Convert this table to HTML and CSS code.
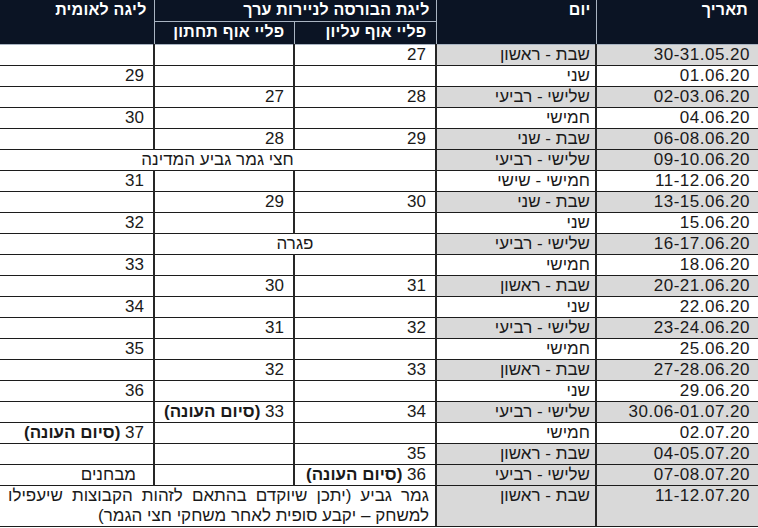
FILE: index.html
```html
<!DOCTYPE html>
<html lang="he" dir="rtl">
<head>
<meta charset="utf-8">
<link rel="stylesheet" href="styles.css">
</head>
<body>
<div class="page">
<table class="sched">
<colgroup>
<col class="c-date"><col class="c-day"><col class="c-up"><col class="c-low"><col class="c-nat">
</colgroup>
<thead>
<tr class="h1">
<th rowspan="2" class="h-date">תאריך</th>
<th rowspan="2" class="h-day">יום</th>
<th colspan="2" class="h-grp">ליגת הבורסה לניירות ערך</th>
<th rowspan="2" class="h-nat">ליגה לאומית</th>
</tr>
<tr class="h2">
<th class="h-sub">פליי אוף עליון</th>
<th class="h-sub">פליי אוף תחתון</th>
</tr>
</thead>
<tbody>
<tr class="g"><td>30-31.05.20</td><td>שבת - ראשון</td><td>27</td><td></td><td></td></tr>
<tr><td>01.06.20</td><td>שני</td><td></td><td></td><td>29</td></tr>
<tr class="g"><td>02-03.06.20</td><td>שלישי - רביעי</td><td>28</td><td>27</td><td></td></tr>
<tr><td>04.06.20</td><td>חמישי</td><td></td><td></td><td>30</td></tr>
<tr class="g"><td>06-08.06.20</td><td>שבת - שני</td><td>29</td><td>28</td><td></td></tr>
<tr class="g"><td>09-10.06.20</td><td>שלישי - רביעי</td><td colspan="3" class="mid">חצי גמר גביע המדינה</td></tr>
<tr><td>11-12.06.20</td><td>חמישי - שישי</td><td></td><td></td><td>31</td></tr>
<tr class="g"><td>13-15.06.20</td><td>שבת - שני</td><td>30</td><td>29</td><td></td></tr>
<tr><td>15.06.20</td><td>שני</td><td></td><td></td><td>32</td></tr>
<tr class="g"><td>16-17.06.20</td><td>שלישי - רביעי</td><td colspan="2" class="mid">פגרה</td><td></td></tr>
<tr><td>18.06.20</td><td>חמישי</td><td></td><td></td><td>33</td></tr>
<tr class="g"><td>20-21.06.20</td><td>שבת - ראשון</td><td>31</td><td>30</td><td></td></tr>
<tr><td>22.06.20</td><td>שני</td><td></td><td></td><td>34</td></tr>
<tr class="g"><td>23-24.06.20</td><td>שלישי - רביעי</td><td>32</td><td>31</td><td></td></tr>
<tr><td>25.06.20</td><td>חמישי</td><td></td><td></td><td>35</td></tr>
<tr class="g"><td>27-28.06.20</td><td>שבת - ראשון</td><td>33</td><td>32</td><td></td></tr>
<tr><td>29.06.20</td><td>שני</td><td></td><td></td><td>36</td></tr>
<tr class="g"><td>30.06-01.07.20</td><td>שלישי - רביעי</td><td>34</td><td>33 <b>(סיום העונה)</b></td><td></td></tr>
<tr><td>02.07.20</td><td>חמישי</td><td></td><td></td><td>37 <b>(סיום העונה)</b></td></tr>
<tr class="g"><td>04-05.07.20</td><td>שבת - ראשון</td><td>35</td><td></td><td></td></tr>
<tr class="g"><td>07-08.07.20</td><td>שלישי - רביעי</td><td>36 <b>(סיום העונה)</b></td><td></td><td class="exam">מבחנים</td></tr>
<tr class="g last"><td>11-12.07.20</td><td>שבת - ראשון</td><td colspan="3" class="note"><span class="l1">גמר גביע (יתכן שיוקדם בהתאם לזהות הקבוצות שיעפילו</span><span class="l2">למשחק – יקבע סופית לאחר משחקי חצי הגמר)</span></td></tr>
</tbody>
</table>
</div>
</body>
</html>
```

FILE: styles.css
```css
html, body {
  margin: 0;
  padding: 0;
  background: #ffffff;
}
.page {
  width: 758px;
  height: 528px;
  overflow: hidden;
}
.sched {
  width: 758px;
  border-collapse: collapse;
  table-layout: fixed;
  font-family: "Liberation Sans", Arial, sans-serif;
  font-size: 17px;
  color: #1a1a1a;
}
.c-date { width: 162px; }
.c-day { width: 160px; }
.c-up { width: 142px; }
.c-low { width: 140px; }
.c-nat { width: 154px; }

thead th {
  background: #0b1424;
  color: #ffffff;
  font-weight: bold;
  font-size: 16px;
  letter-spacing: 0.2px;
  text-align: right;
  vertical-align: top;
  line-height: 18px;
  padding: 1px 7px 0 2px;
  border: 1px solid #a9b4c2;
  border-top: none;
  white-space: nowrap;
}
.h1 th { height: 20px; }
.h2 th { height: 21px; }
.h-date { padding-right: 10px; border-right: none; }
.h-day { padding-right: 5px; }
.h-grp { padding-right: 6px; }
.h-nat { border-left: none; }
.h-sub { padding-right: 9px; }

tbody td {
  height: 20px;
  padding: 0 9px 0 2px;
  line-height: 20px;
  text-align: right;
  vertical-align: middle;
  border-top: 1px solid #1c1c1c;
  border-bottom: 1px solid #1c1c1c;
  border-left: 2px solid #262626;
  border-right: 2px solid #262626;
  white-space: nowrap;
}
tbody td:first-child {
  border-right: none;
  padding-right: 8px;
  letter-spacing: 0.5px;
}
tbody td:last-child { border-left: none; }
tbody td:nth-child(2) { padding-right: 5px; }
tbody tr.g td:nth-child(1),
tbody tr.g td:nth-child(2) { background: #d9d9d9; }
tbody td.mid { text-align: center; padding: 0; }
tbody td.exam { padding-right: 17px; }
tbody b { font-weight: bold; }

tbody tr.last td {
  height: 40px;
  vertical-align: top;
  border-bottom: 1px solid #1c1c1c;
}
tbody td.note {
  white-space: normal;
  padding: 0 6px 0 8px;
  line-height: 20px;
  letter-spacing: 0;
}
.note .l1 {
  display: block;
  text-align: justify;
  text-align-last: justify;
}
.note .l2 {
  display: block;
  text-align: right;
}
```
